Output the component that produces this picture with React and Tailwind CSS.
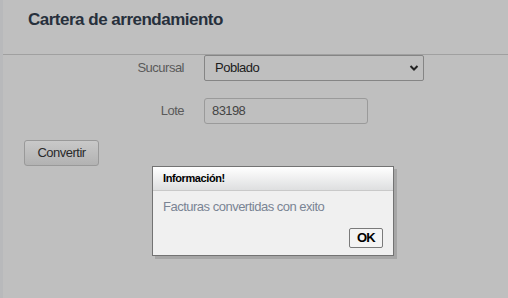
export default function App() {
  return (
    <div
      className="relative flex w-[508px] h-[298px] overflow-hidden bg-[#bfbfbf]"
      style={{ fontFamily: '"Liberation Sans", Arial, sans-serif' }}
    >
      <div className="w-[3px] shrink-0 bg-[#b8b9bb]" />
      <div className="flex-1 flex flex-col">
        <div className="h-[55px] border-b border-[#a0a0a0] pl-[25px] pt-[9px]">
          <h1 className="text-[17px] leading-[22px] font-bold tracking-[-0.5px] text-[#27303c]">
            Cartera de arrendamiento
          </h1>
        </div>
        <div className="flex flex-col gap-[16px]">
          <div className="flex items-center gap-[20px] h-[26px]">
            <div className="w-[181px] text-right text-[13px] tracking-[-0.5px] text-[#5a5a5a]">Sucursal</div>
            <div className="w-[220px] h-[26px] border border-[#858585] rounded-[2px] flex items-center justify-between pl-[10px] pr-[4px]">
              <span className="text-[13px] tracking-[-0.5px] text-[#1c1c1c]">Poblado</span>
              <svg width="10" height="8" viewBox="0 0 10 8">
                <path d="M1.5 2 L5 5.5 L8.5 2" fill="none" stroke="#222" strokeWidth="2" />
              </svg>
            </div>
          </div>
          <div className="flex items-center gap-[20px] h-[26px] mt-[1px]">
            <div className="w-[181px] text-right text-[13px] tracking-[-0.5px] text-[#5a5a5a]">Lote</div>
            <div className="w-[164px] h-[26px] border border-[#9a9a9a] rounded-[3px] flex items-center pl-[7px]">
              <span className="text-[13px] tracking-[-0.6px] text-[#444]">83198</span>
            </div>
          </div>
          <div className="pl-[21px]">
            <button className="w-[75px] h-[26px] border border-[#999] rounded-[3px] bg-gradient-to-b from-[#c9c9c9] to-[#b2b2b2] text-[13px] tracking-[-0.5px] text-[#2a2a2a] flex items-center justify-center">
              Convertir
            </button>
          </div>
        </div>
      </div>

      <div className="absolute left-[155px] top-[169px] w-[242px] h-[90px] bg-[#a6a6a6]" />
      <div className="absolute left-[152px] top-[166px] w-[242px] h-[90px] border border-[#737373] bg-[#f0f0f0] flex flex-col">
        <div className="h-[24px] shrink-0 border-b border-[#c9c9c9] bg-gradient-to-b from-[#ffffff] to-[#dedfe0] pl-[10px] flex items-center">
          <span className="text-[11px] font-bold tracking-[-0.4px] text-black">Información!</span>
        </div>
        <div className="pl-[10px] pt-[8px] text-[13px] tracking-[-0.5px] text-[#7a8494] leading-[16px]">
          Facturas convertidas con exito
        </div>
        <div className="flex justify-end pr-[10px] mt-[13px]">
          <button className="w-[34px] h-[20px] border border-[#7a7a7a] rounded-[2px] bg-[#f4f4f4] text-[13px] font-bold tracking-[-0.8px] text-black flex items-center justify-center">
            OK
          </button>
        </div>
      </div>
    </div>
  );
}
